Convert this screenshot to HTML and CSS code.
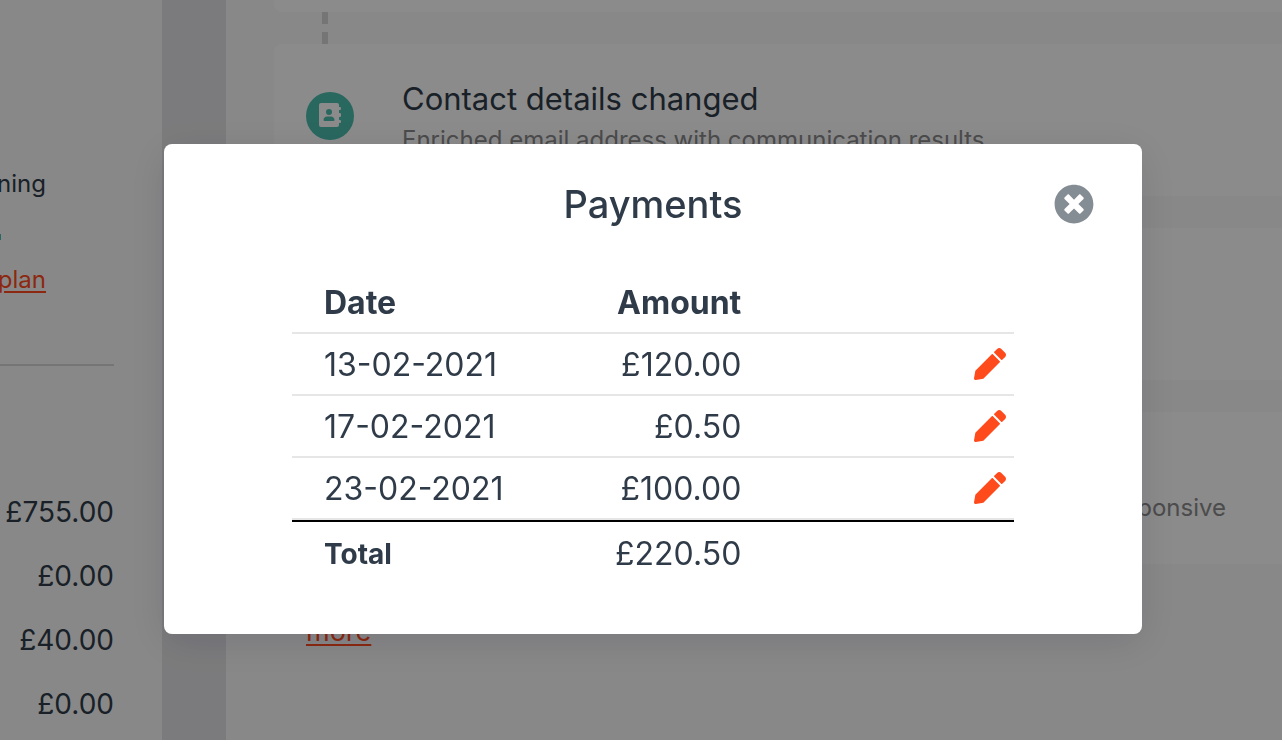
FILE: index.html
```
<!DOCTYPE html>
<html lang="en">
<head>
    <meta charset="UTF-8">
    <title>Payments</title>
    <link rel="stylesheet" href="styles.css">
</head>
<body>
    <div class="page">
        <aside class="sidebar">
            <div class="account">
                <p>ning</p>
                <span class="statusDot"></span>
                <a href="#">plan</a>
            </div>
            <hr>
            <ul class="totals">
                <li>£755.00</li>
                <li>£0.00</li>
                <li>£40.00</li>
                <li>£0.00</li>
            </ul>
        </aside>
        <main class="timeline">
            <div class="card cardEnd"></div>
            <div class="connector"></div>
            <article class="card">
                <span class="cardIcon">
                    <svg width="24" height="24" viewBox="1 0 24 24">
                        <path fill-rule="evenodd" d="M4 -1h16a2 2 0 0 1 2 2v2h1a1 1 0 0 1 1 1v1a1 1 0 0 1-1 1h-1v3h1a1 1 0 0 1 1 1v2a1 1 0 0 1-1 1h-1v3h1a1 1 0 0 1 1 1v1a1 1 0 0 1-1 1h-1v2a2 2 0 0 1-2 2H4a2 2 0 0 1-2-2V1a2 2 0 0 1 2-2zM12 5a3 3 0 1 0 0 6 3 3 0 0 0 0-6zM7.500 17h9a1 1 0 0 0 1-1c0-2-1.700-3.500-3.500-3.500h-4c-1.800 0-3.500 1.500-3.500 3.500a1 1 0 0 0 1 1z"/>
                    </svg>
                </span>
                <div class="cardText">
                    <h2>Contact details changed</h2>
                    <p>Enriched email address with communication results</p>
                </div>
            </article>
            <div class="connector"></div>
            <article class="card"></article>
            <div class="connector"></div>
            <article class="card cardRight">
                <p>ponsive</p>
            </article>
            <a class="moreLink" href="#">more</a>
        </main>
    </div>

    <div class="overlay">
        <section class="modal" role="dialog" aria-labelledby="modalTitle">
            <header class="modalHeader">
                <h1 id="modalTitle">Payments</h1>
                <button class="closeModal" type="button" aria-label="Close">
                    <svg width="40" height="40" viewBox="0 0 512 512">
                        <path fill="#848c94" d="M256 8C119 8 8 119 8 256s111 248 248 248 248-111 248-248S393 8 256 8zm121.600 313.100c4.700 4.700 4.700 12.300 0 17L338 377.600c-4.700 4.700-12.300 4.700-17 0L256 312l-65.100 65.600c-4.700 4.700-12.300 4.700-17 0L134.400 338c-4.700-4.700-4.700-12.300 0-17l65.600-65-65.600-65.100c-4.700-4.700-4.700-12.300 0-17l39.600-39.600c4.700-4.700 12.300-4.700 17 0l65 65.700 65.100-65.600c4.700-4.700 12.300-4.700 17 0l39.600 39.600c4.700 4.700 4.700 12.300 0 17L312 256l65.600 65.100z"/>
                    </svg>
                </button>
            </header>
            <table class="payments">
                <thead>
                    <tr><th scope="col">Date</th><th scope="col" class="amount">Amount</th><td></td></tr>
                </thead>
                <tbody>
                    <tr>
                        <td>13-02-2021</td>
                        <td class="amount">£120.00</td>
                        <td class="action"><button type="button" aria-label="Edit payment"><svg width="32" height="32" viewBox="0 0 512 512"><use href="#pencil"/></svg></button></td>
                    </tr>
                    <tr>
                        <td>17-02-2021</td>
                        <td class="amount">£0.50</td>
                        <td class="action"><button type="button" aria-label="Edit payment"><svg width="32" height="32" viewBox="0 0 512 512"><use href="#pencil"/></svg></button></td>
                    </tr>
                    <tr>
                        <td>23-02-2021</td>
                        <td class="amount">£100.00</td>
                        <td class="action"><button type="button" aria-label="Edit payment"><svg width="32" height="32" viewBox="0 0 512 512"><use href="#pencil"/></svg></button></td>
                    </tr>
                </tbody>
                <tfoot>
                    <tr><th scope="row">Total</th><td class="amount">£220.50</td><td></td></tr>
                </tfoot>
            </table>
        </section>
    </div>

    <svg class="sprite">
        <symbol id="pencil" viewBox="0 0 512 512">
            <path fill="#ff4a1c" d="M497.900 142.100l-46.100 46.100c-4.700 4.700-12.300 4.700-17 0l-111-111c-4.700-4.700-4.700-12.300 0-17l46.100-46.100c18.700-18.700 49.100-18.700 67.900 0l60.100 60.100c18.800 18.700 18.800 49.100 0 67.900zM284.200 99.800L21.600 362.400.4 483.900c-2.900 16.400 11.400 30.600 27.800 27.800l121.500-21.300 262.600-262.600c4.700-4.700 4.700-12.300 0-17l-111-111c-4.800-4.700-12.400-4.700-17.100 0z"/>
        </symbol>
    </svg>
</body>
</html>
```
FILE: styles.css
```
* {
    box-sizing: border-box;
}
body {
    margin: 0;
    font-family: Inter, "Liberation Sans", sans-serif;
    color: #2f3b48;
    background-color: #f8f8f8;
}
h1, h2, p, ul {
    margin: 0;
    padding: 0;
    font-weight: 400;
}
button {
    padding: 0;
    border: 0;
    background: none;
    cursor: pointer;
}
svg {
    display: block;
    overflow: visible;
}

.page {
    display: flex;
    height: 100vh;
    overflow: hidden;
}
.sidebar {
    flex: none;
    width: 162px;
    padding: 168px 48px 0 0;
}
.account {
    display: flex;
    flex-direction: column;
    align-items: flex-end;
    width: 46px;
    font-size: 24px;
    line-height: 32px;
}
.statusDot {
    align-self: flex-start;
    width: 1px;
    height: 6px;
    margin: 34px 0 24px;
    background-color: #4cbdad;
}
.account a, .moreLink {
    color: #ff4a1c;
    text-decoration-thickness: 2px;
    text-underline-offset: 3px;
}
.sidebar hr {
    height: 2px;
    margin: 68px 0 114px;
    border: 0;
    background-color: #d6d6d6;
}
.totals {
    list-style: none;
    font-size: 28px;
    line-height: 64px;
    text-align: right;
}

.timeline {
    flex: 1;
    padding-left: 48px;
    border-left: 64px solid #e1e1e4;
}
.card {
    display: flex;
    gap: 48px;
    height: 152px;
    padding: 32px 32px 0;
    border-radius: 8px 0 0 8px;
    background-color: #fdfdfd;
}
.cardEnd {
    height: 12px;
    padding: 0;
    border-radius: 0 0 0 8px;
}
.connector {
    width: 6px;
    height: 32px;
    margin-left: 48px;
    background: linear-gradient(#d6d6d6 12px, transparent 12px 20px, #d6d6d6 20px);
}
.cardIcon {
    display: flex;
    flex: none;
    align-items: center;
    justify-content: center;
    width: 48px;
    height: 48px;
    margin-top: 16px;
    border-radius: 50%;
    background-color: #4cbdad;
}
.cardIcon path {
    fill: #fdfdfd;
}
.cardText h2 {
    font-size: 31px;
    line-height: 46px;
}
.card p {
    color: #8a8a8a;
    font-size: 24px;
    line-height: 36px;
}
.cardRight {
    justify-content: flex-end;
    padding: 78px 56px 0 0;
}
.moreLink {
    display: block;
    margin: 48px 0 0 32px;
    font-size: 27px;
    line-height: 40px;
}

.overlay {
    position: fixed;
    inset: 0;
    padding: 144px 140px 0 164px;
    background-color: rgba(0, 0, 0, 0.45);
}
.modal {
    padding: 32px 48px 50px 128px;
    border-radius: 8px;
    background-color: white;
    box-shadow: 0 8px 40px rgba(0, 0, 40, 0.12);
}
.modalHeader {
    display: grid;
    grid-template-columns: 1fr 40px;
    gap: 40px;
    align-items: center;
    margin-bottom: 40px;
}
.modalHeader h1 {
    font-size: 38px;
    font-weight: 500;
    line-height: 56px;
    text-align: center;
}
.payments {
    width: calc(100% - 80px);
    border-spacing: 0;
    table-layout: fixed;
    font-size: 32px;
    line-height: 40px;
    white-space: nowrap;
}
.payments th, .payments td {
    height: 62px;
    padding: 2px 32px 0;
    text-align: left;
    border-bottom: 2px solid #e6e6e6;
}
.payments .amount {
    text-align: right;
}
.payments .action {
    padding: 0 8px 0 0;
}
.action button {
    display: block;
    margin-left: auto;
}
.payments tfoot th, .payments tfoot td {
    height: 64px;
    border-top: 2px solid black;
    border-bottom: 0;
}
.payments tfoot th {
    font-size: 28px;
}
.sprite {
    display: none;
}
```
